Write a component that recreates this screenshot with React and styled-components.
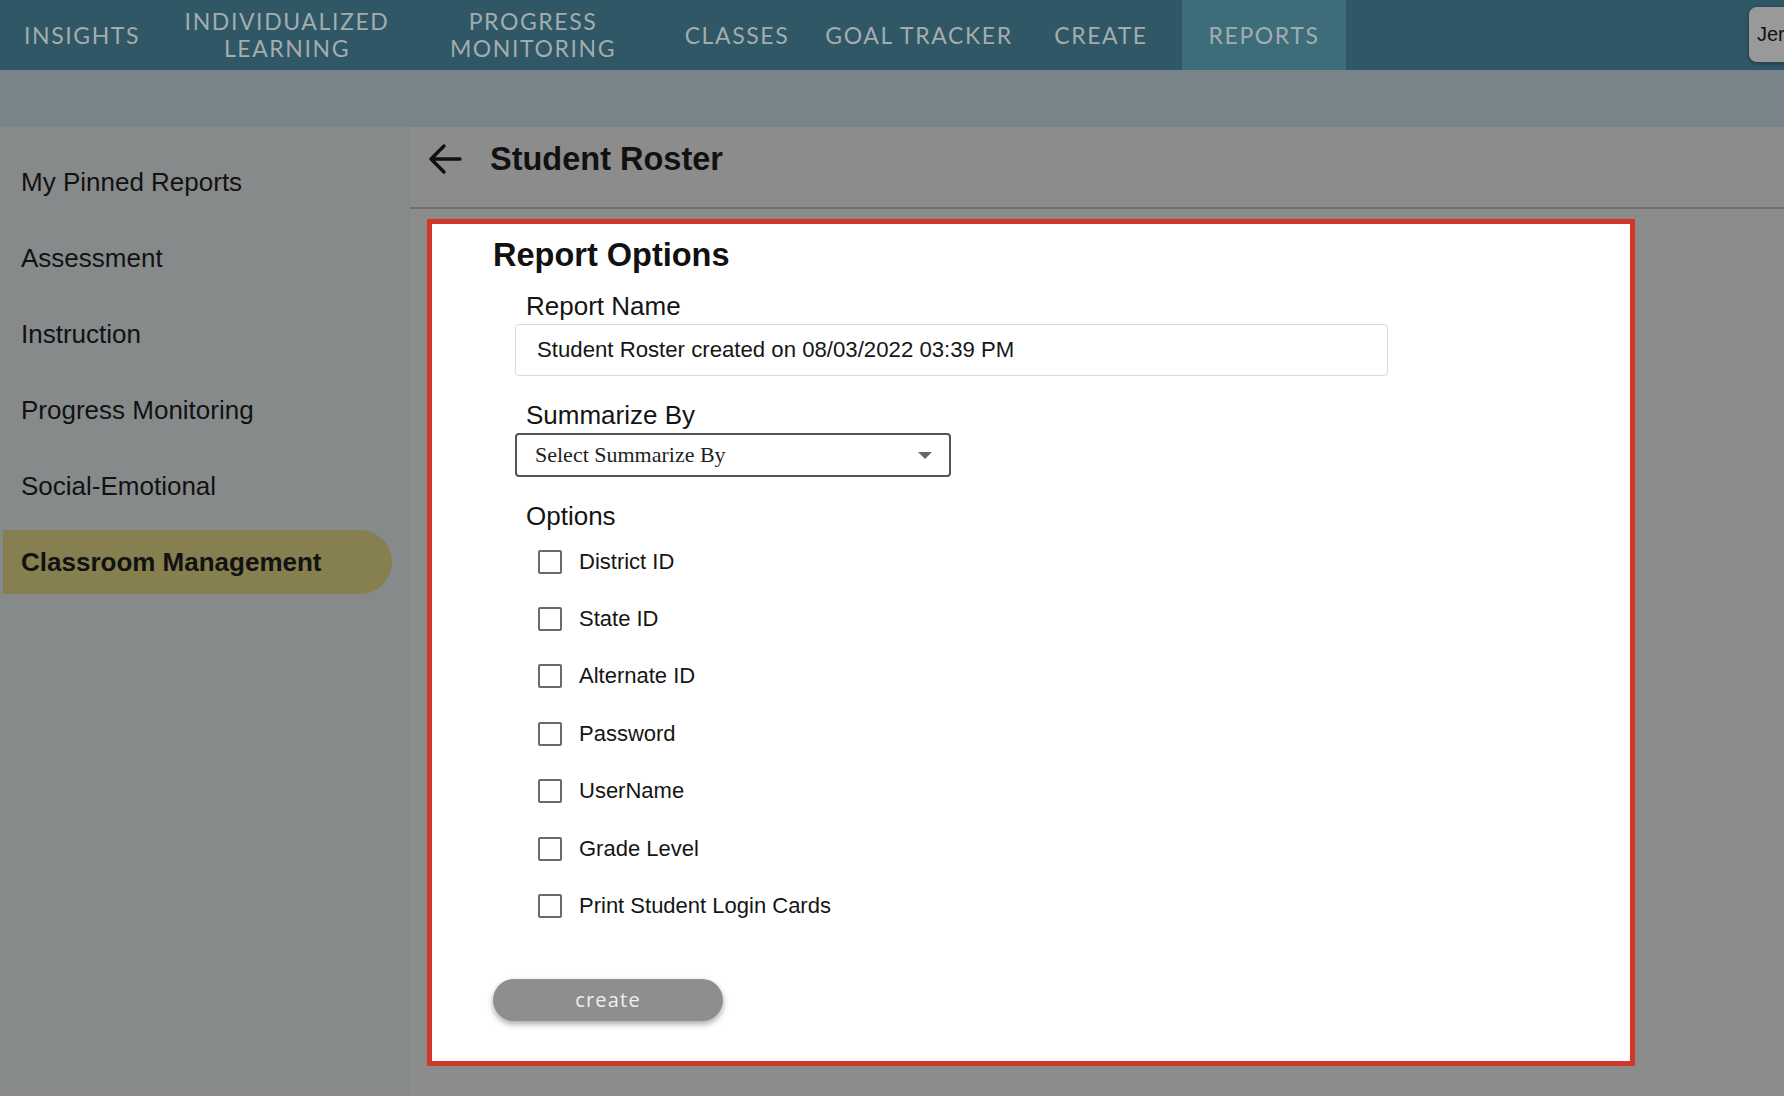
import React from "react";
import styled, { createGlobalStyle } from "styled-components";

const GlobalStyle = createGlobalStyle`
    html, body {
        margin: 0;
        padding: 0;
        overflow: hidden;
    }
    body {
        font-family: "Liberation Sans", Arial, sans-serif;
        background-color: #8c8c8c;
    }
    * {
        box-sizing: border-box;
    }
`;

const Page = styled.div`
    display: flex;
    flex-direction: column;
    width: 100vw;
    height: 100vh;
    overflow: hidden;
`;

const TopNav = styled.nav`
    display: flex;
    align-items: stretch;
    height: 70px;
    background-color: #2f5765;
    flex-shrink: 0;
    overflow: hidden;
`;

const NavItem = styled.div`
    display: flex;
    align-items: center;
    justify-content: center;
    width: ${(p) => p.$w}px;
    flex-shrink: 0;
    text-align: center;
    font-family: "Lato", "Open Sans", sans-serif;
    font-size: 23px;
    line-height: 27px;
    letter-spacing: 1.6px;
    text-transform: uppercase;
    color: #a3acaf;
    background-color: ${(p) => (p.$active ? "#3d6c7a" : "transparent")};
`;

const UserButton = styled.div`
    display: flex;
    align-items: center;
    margin: 7px -40px 8px auto;
    width: 75px;
    padding-left: 8px;
    flex-shrink: 0;
    background-color: #99999a;
    border-radius: 8px;
    box-shadow: 0 1px 4px rgba(0, 0, 0, 0.35);
    font-size: 20px;
    color: #111;
`;

const SubBar = styled.div`
    height: 57px;
    background-color: #78848a;
    flex-shrink: 0;
`;

const Body = styled.div`
    display: flex;
    flex: 1;
    min-height: 0;
`;

const Sidebar = styled.aside`
    width: 410px;
    flex-shrink: 0;
    background-color: #878a8b;
    padding: 23px 18px 0 3px;
    display: flex;
    flex-direction: column;
    gap: 12px;
`;

const SideItem = styled.div`
    display: flex;
    align-items: center;
    height: 64px;
    padding-left: 18px;
    font-size: 26px;
    font-weight: ${(p) => (p.$active ? 700 : 400)};
    color: #121212;
    background-color: ${(p) => (p.$active ? "#867f50" : "transparent")};
    border-radius: 0 32px 32px 0;
`;

const Main = styled.main`
    flex: 1;
    display: flex;
    flex-direction: column;
    background-color: #8c8c8c;
`;

const Header = styled.div`
    display: flex;
    align-items: center;
    gap: 27px;
    height: 82px;
    padding: 0 0 16px 17px;
    border-bottom: 2px solid #6f7070;
`;

const Title = styled.h1`
    margin: 0;
    font-size: 32.5px;
    font-weight: 700;
    color: #111;
`;

const Card = styled.section`
    margin: 10px 0 0 17px;
    width: 1208px;
    height: 847px;
    background-color: #ffffff;
    border: 5px solid #d0382a;
    padding: 13px 0 0 61px;
    display: flex;
    flex-direction: column;
`;

const CardTitle = styled.h2`
    margin: 0;
    font-size: 32.5px;
    line-height: 36px;
    font-weight: 700;
    color: #111;
`;

const Fields = styled.div`
    display: flex;
    flex-direction: column;
    margin-left: 22px;
`;

const Label = styled.div`
    padding-left: 11px;
    font-size: 26px;
    line-height: 30px;
    color: #141414;
    margin-top: ${(p) => p.$top}px;
`;

const TextInput = styled.div`
    display: flex;
    align-items: center;
    margin-top: 3px;
    width: 873px;
    height: 52px;
    padding-left: 21px;
    border: 1px solid #d9d9d9;
    border-radius: 4px;
    font-size: 22.2px;
    color: #161616;
`;

const Select = styled.div`
    display: flex;
    align-items: center;
    justify-content: space-between;
    margin-top: 3px;
    width: 436px;
    height: 44px;
    padding: 0 17px 0 18px;
    border: 2px solid #555;
    border-radius: 4px;
    font-family: "Liberation Serif", "Times New Roman", serif;
    font-size: 22px;
    color: #1e1e1e;
`;

const Caret = styled.span`
    width: 0;
    height: 0;
    border-left: 7px solid transparent;
    border-right: 7px solid transparent;
    border-top: 7px solid #666;
`;

const OptionList = styled.div`
    display: flex;
    flex-direction: column;
    margin-top: 2px;
    padding-left: 23px;
`;

const OptionRow = styled.label`
    display: flex;
    align-items: center;
    gap: 17px;
    height: 57.4px;
    font-size: 22px;
    color: #151515;
`;

const Box = styled.span`
    width: 24px;
    height: 24px;
    border: 2px solid #6a6a6a;
    border-radius: 2px;
    flex-shrink: 0;
`;

const CreateButton = styled.button`
    margin-top: 44px;
    width: 230px;
    height: 42px;
    border: none;
    border-radius: 21px;
    background-color: #8e8e8e;
    box-shadow: 0 3px 6px rgba(0, 0, 0, 0.35);
    font-family: "Open Sans", sans-serif;
    font-size: 20px;
    letter-spacing: 1.2px;
    color: #eeeeee;
    cursor: pointer;
`;

const navItems = [
    { label: "Insights", w: 164 },
    { label: ["Individualized", "Learning"], w: 246 },
    { label: ["Progress", "Monitoring"], w: 246 },
    { label: "Classes", w: 162 },
    { label: "Goal Tracker", w: 202 },
    { label: "Create", w: 162 },
    { label: "Reports", w: 164, active: true },
];

const sideItems = [
    "My Pinned Reports",
    "Assessment",
    "Instruction",
    "Progress Monitoring",
    "Social-Emotional",
    "Classroom Management",
];

const options = [
    "District ID",
    "State ID",
    "Alternate ID",
    "Password",
    "UserName",
    "Grade Level",
    "Print Student Login Cards",
];

const BackArrow = () => (
    <svg width="36" height="32" viewBox="0 0 36 32" fill="none">
        <path
            d="M33 16H4M17 3L4 16l13 13"
            stroke="#111"
            strokeWidth="3.4"
            strokeLinecap="round"
            strokeLinejoin="round"
        />
    </svg>
);

const App = () => {
    return (
        <Page>
            <GlobalStyle />
            <TopNav>
                {navItems.map((item, i) => (
                    <NavItem key={i} $w={item.w} $active={item.active}>
                        {Array.isArray(item.label) ? (
                            <span>
                                {item.label[0]}
                                <br />
                                {item.label[1]}
                            </span>
                        ) : (
                            item.label
                        )}
                    </NavItem>
                ))}
                <UserButton>Jer</UserButton>
            </TopNav>
            <SubBar />
            <Body>
                <Sidebar>
                    {sideItems.map((s) => (
                        <SideItem key={s} $active={s === "Classroom Management"}>
                            {s}
                        </SideItem>
                    ))}
                </Sidebar>
                <Main>
                    <Header>
                        <BackArrow />
                        <Title>Student Roster</Title>
                    </Header>
                    <Card>
                        <CardTitle>Report Options</CardTitle>
                        <Fields>
                            <Label $top={18}>Report Name</Label>
                            <TextInput>Student Roster created on 08/03/2022 03:39 PM</TextInput>
                            <Label $top={24}>Summarize By</Label>
                            <Select>
                                Select Summarize By
                                <Caret />
                            </Select>
                            <Label $top={24}>Options</Label>
                            <OptionList>
                                {options.map((o) => (
                                    <OptionRow key={o}>
                                        <Box />
                                        {o}
                                    </OptionRow>
                                ))}
                            </OptionList>
                        </Fields>
                        <CreateButton>create</CreateButton>
                    </Card>
                </Main>
            </Body>
        </Page>
    );
};

export default App;
